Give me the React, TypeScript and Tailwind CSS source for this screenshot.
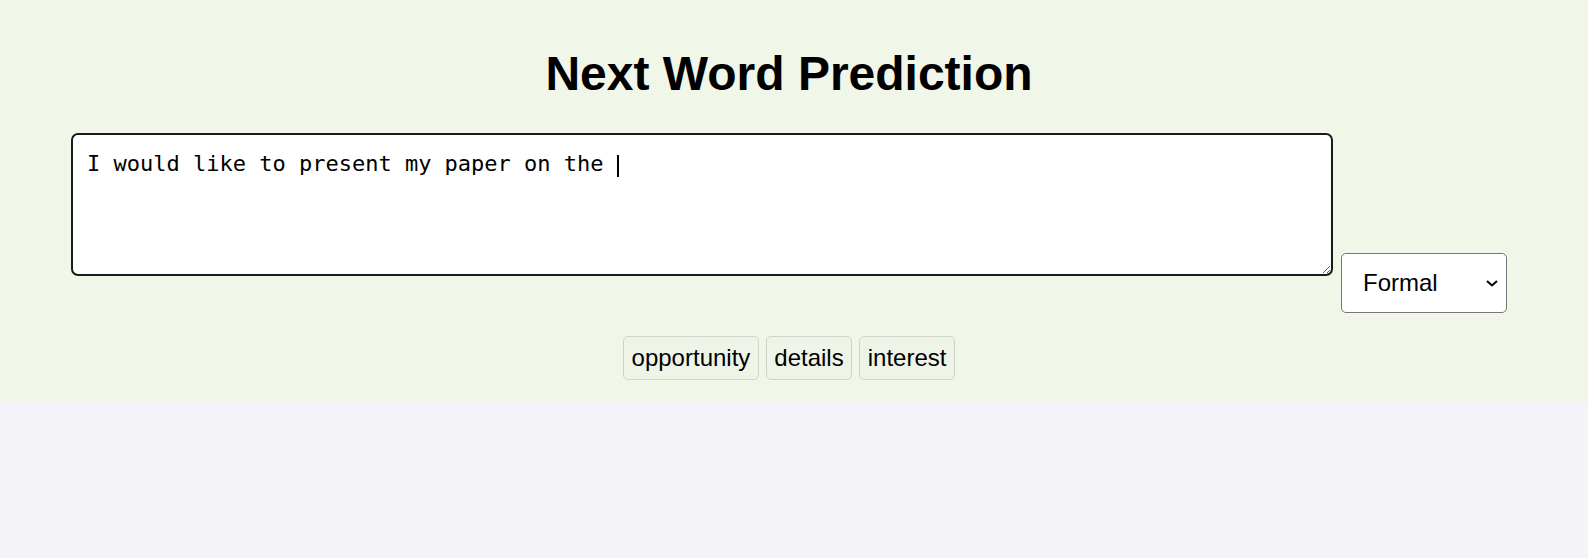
import { useState } from 'react';

const suggestions = ['opportunity', 'details', 'interest'];

export default function App() {
  const [text, setText] = useState('I would like to present my paper on the ');
  const [tone, setTone] = useState('Formal');

  return (
    <div className="min-h-screen bg-[#f3f3f8] font-['Liberation_Sans',Arial,sans-serif] text-black">
      <div className="bg-[#f0f6e8] pt-[46px] pb-[21px] pr-[10px] flex flex-col items-center">
        <h1 className="text-[48px] leading-[55px] font-bold">Next Word Prediction</h1>

        <div className="mt-[32px] flex items-start gap-[8px]">
          <div className="relative">
            <textarea
              value={text}
              onChange={(e) => setText(e.target.value)}
              className="block w-[1262px] h-[143px] bg-white border-2 border-[#1a1a1a] rounded-[7px] pt-[16px] pl-[14px] pr-[13px] font-['DejaVu_Sans_Mono',monospace] text-[22px] leading-[26px] outline-none"
            />
            {/* fake caret, drawn over the textarea */}
            <div className="pointer-events-none absolute inset-0 border-2 border-transparent pt-[16px] pl-[14px] pr-[13px] font-['DejaVu_Sans_Mono',monospace] text-[22px] leading-[26px] whitespace-pre-wrap">
              <span className="text-transparent">{text}</span>
              <span className="inline-block w-[2px] h-[22px] bg-black align-[-6px]" />
            </div>
          </div>

          <div className="relative mt-[120px]">
            <select
              value={tone}
              onChange={(e) => setTone(e.target.value)}
              className="appearance-none w-[166px] h-[60px] bg-white border border-[#767676] rounded-[5px] pl-[21px] text-[24px] outline-none"
            >
              <option>Formal</option>
              <option>Informal</option>
              <option>Casual</option>
            </select>
            <svg className="pointer-events-none absolute right-[9px] top-[27px]" width="12" height="7" viewBox="0 0 12 7">
              <polyline points="1,1 6,5.5 11,1" fill="none" stroke="#000" strokeWidth="2" />
            </svg>
          </div>
        </div>

        <div className="mt-[23px] flex gap-[7px]">
          {suggestions.map((s) => (
            <button
              key={s}
              onClick={() => setText(text + s + ' ')}
              className="h-[44px] px-[7.5px] bg-[#eff4e9] border border-[#d0d3cc] rounded-[5px] text-[24px] leading-[28px]"
            >
              {s}
            </button>
          ))}
        </div>
      </div>
    </div>
  );
}
